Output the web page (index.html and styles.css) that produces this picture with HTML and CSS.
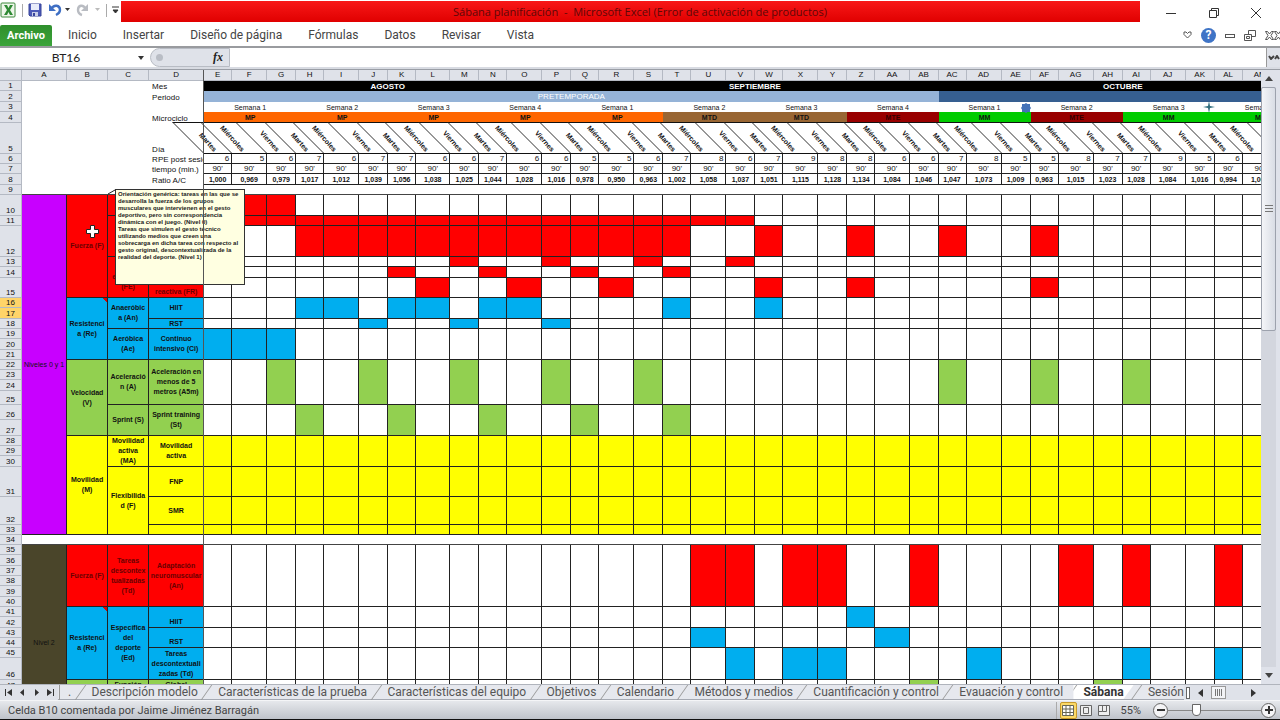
FILE: index.html
```html
<!DOCTYPE html>
<html lang="es">
<head>
    <meta charset="UTF-8">
    <meta name="viewport" content="width=device-width, initial-scale=1.0">
    <title>Sábana planificación - Microsoft Excel</title>
    <link rel="stylesheet" href="styles.css">
</head>
<body>
    <header class="titlebar">
        <div class="quick">
            <svg width="16" height="16" viewBox="0 0 16 16"><rect x="1" y="1" width="14" height="14" rx="1" fill="#eef6ea" stroke="#3c8a3c"/><path d="M4 3h3l1.500 3L10 3h3l-3 5 3 5h-3l-1.500-3L7 13H4l3-5z" fill="#2f8a35"/></svg>
            <span class="sep"></span>
            <button type="button" aria-label="Guardar"><svg width="14" height="14" viewBox="0 0 14 14"><path d="M1 1h12v12H2l-1-1z" fill="#4d5bb8" stroke="#39459a"/><rect x="3" y="1" width="8" height="6" fill="#e8ecfa"/><rect x="4" y="9" width="6" height="4" fill="#c9cfe8"/><rect x="5" y="10" width="2" height="3" fill="#39459a"/></svg></button>
            <button type="button" aria-label="Deshacer"><svg width="22" height="14" viewBox="0 0 22 14"><path d="M3 6c3-5 9-4 9 1 0 3-2 4-4 5" fill="none" stroke="#3f6fc4" stroke-width="2.400"/><path d="M1 1v7h7z" fill="#3f6fc4"/><path d="M17 5h5l-2.500 3z" fill="#333"/></svg></button>
            <button type="button" aria-label="Rehacer"><svg width="24" height="14" viewBox="0 0 24 14"><path d="M10 6c-3-5-8-4-8 1 0 3 1 4 4 5" fill="none" stroke="#b9bcc2" stroke-width="2.400"/><path d="M12 1v7H5z" fill="#b9bcc2"/><path d="M19 5h5l-2.500 3z" fill="#bbb"/></svg></button>
            <span class="sep"></span>
            <button type="button" aria-label="Personalizar"><svg width="7" height="8" viewBox="0 0 7 8"><path d="M0 1h7M1 4h5L3.500 7z" stroke="#333" fill="#333"/></svg></button>
        </div>
        <h1 class="title">Sábana planificación&nbsp; -&nbsp; Microsoft Excel (Error de activación de productos)</h1>
        <div class="window-buttons">
            <button type="button" aria-label="Minimizar"><svg width="10" height="10"><path d="M0 5.500h10" stroke="#333"/></svg></button>
            <button type="button" aria-label="Restaurar"><svg width="10" height="10" fill="none" stroke="#333"><path d="M.5 2.500h7v7h-7zM2.500 2.500v-2h7v7h-2"/></svg></button>
            <button type="button" aria-label="Cerrar"><svg width="10" height="10"><path d="M0 0l10 10M10 0L0 10" stroke="#333"/></svg></button>
        </div>
    </header>

    <nav class="ribbon">
        <a class="file" href="#">Archivo</a>
        <a href="#">Inicio</a>
        <a href="#">Insertar</a>
        <a href="#">Diseño de página</a>
        <a href="#">Fórmulas</a>
        <a href="#">Datos</a>
        <a href="#">Revisar</a>
        <a href="#">Vista</a>
        <div class="ribbon-tools">
            <button type="button" aria-label="Minimizar la cinta"><svg width="9" height="8" fill="none" stroke="#555"><path d="M4.500 7L1 3.500V1h2l1.500 1.500L6 1h2v2.500z"/></svg></button>
            <button type="button" aria-label="Ayuda" class="help">?</button>
            <button type="button" aria-label="Minimizar libro"><svg width="10" height="10" fill="none" stroke="#555"><rect x=".5" y="4.500" width="9" height="3"/></svg></button>
            <button type="button" aria-label="Restaurar libro"><svg width="12" height="11" fill="#fff" stroke="#555"><path d="M4.500.5h7v6h-7z"/><path d="M.5 4.500h7v6h-7zM2.500 6.500h3v2h-3z"/></svg></button>
            <button type="button" aria-label="Cerrar libro"><svg width="15" height="9" fill="none" stroke="#555"><path d="M.5.5h2l2 2.500 2-2.500h2L6 4.500l2.500 4h-2l-2-2.500-2 2.500h-2L3 4.500zM9.500.5h2l2 2.500 1.500-2.500M15 8.500L13.500 6l-2 2.500h-2l2.500-4-2.500-4"/></svg></button>
        </div>
    </nav>

    <div class="formula">
        <input class="name-box" type="text" value="BT16" aria-label="Cuadro de nombres">
        <button type="button" class="name-arrow" aria-label="Nombres"><svg width="6" height="4"><path d="M0 0h6L3 4z" fill="#333"/></svg></button>
        <div class="fx-box"><span class="knob"></span><button type="button" class="fx" aria-label="Insertar función"><i>f</i>x</button></div>
        <input class="formula-input" type="text" aria-label="Barra de fórmulas">
        <button type="button" class="expand" aria-label="Expandir"><svg width="12" height="5" fill="none" stroke="#444"><path d="M1 1l2 3 3-3M7 4l2-3 2 3" stroke-width="2"/></svg></button>
    </div>

    <main class="workbook">
        <div class="sheet">
            <table class="grid">
                <colgroup id="cols">
                    <col class="w-num"><col class="w-a"><col class="w-b"><col class="w-b"><col class="w-d">
                </colgroup>
                <thead>
                    <tr id="letters"><th></th><th>A</th><th>B</th><th>C</th><th>D</th></tr>
                </thead>
                <tbody id="body">
                    <tr><th>1</th><td colspan="3"></td><td class="name">Mes</td></tr>
                    <tr class="h11"><th>2</th><td colspan="3"></td><td class="name">Periodo</td></tr>
                    <tr><th>3</th><td colspan="3"></td><td></td></tr>
                    <tr class="h11"><th>4</th><td colspan="3"></td><td class="name">Microciclo</td></tr>
                    <tr class="h31"><th>5</th><td colspan="3"></td><td class="name">Día</td></tr>
                    <tr><th>6</th><td colspan="3"></td><td class="name">RPE post sesión</td></tr>
                    <tr><th>7</th><td colspan="3"></td><td class="name">tiempo (min.)</td></tr>
                    <tr class="h11"><th>8</th><td colspan="3"></td><td class="name">Ratio A/C</td></tr>
                    <tr class="blank"><th>9</th><td colspan="4"></td></tr>

                    <tr class="h21"><th>10</th><td rowspan="24" class="purple level">Niveles 0 y 1</td><td rowspan="6" class="red">Fuerza (F)</td><td class="red"></td><td class="red"></td></tr>
                    <tr><th>11</th><td rowspan="2" class="red"></td><td class="red"></td></tr>
                    <tr class="h31"><th>12</th><td class="red"></td></tr>
                    <tr><th>13</th><td rowspan="3" class="red">Fuerza<br>explosiva<br>(FE)</td><td class="red"></td></tr>
                    <tr class="h11"><th>14</th><td class="red"></td></tr>
                    <tr class="h20"><th>15</th><td class="red low">reactiva (FR)</td></tr>
                    <tr><th class="on">16</th><td rowspan="6" class="blue noted">Resistenci<br>a (Re)</td><td rowspan="3" class="blue">Anaeróbic<br>a (An)</td><td rowspan="2" class="blue">HIIT</td></tr>
                    <tr class="h11"><th class="on">17</th></tr>
                    <tr><th>18</th><td class="blue">RST</td></tr>
                    <tr><th>19</th><td rowspan="3" class="blue">Aeróbica<br>(Ae)</td><td rowspan="3" class="blue">Continuo<br>intensivo (Ci)</td></tr>
                    <tr class="h11"><th>20</th></tr>
                    <tr><th>21</th></tr>
                    <tr><th>22</th><td rowspan="6" class="green">Velocidad<br>(V)</td><td rowspan="4" class="green">Aceleració<br>n (A)</td><td rowspan="4" class="green">Aceleración en<br>menos de 5<br>metros (A5m)</td></tr>
                    <tr><th>23</th></tr>
                    <tr class="h11"><th>24</th></tr>
                    <tr class="h14"><th>25</th></tr>
                    <tr class="h15"><th>26</th><td rowspan="2" class="green">Sprint (S)</td><td rowspan="2" class="green">Sprint training<br>(St)</td></tr>
                    <tr class="h16"><th>27</th></tr>
                    <tr><th>28</th><td rowspan="6" class="yellow">Movilidad<br>(M)</td><td rowspan="3" class="yellow">Movilidad<br>activa<br>(MA)</td><td rowspan="3" class="yellow">Movilidad<br>activa</td></tr>
                    <tr><th>29</th></tr>
                    <tr class="h11"><th>30</th></tr>
                    <tr class="h30"><th>31</th><td rowspan="3" class="yellow">Flexibilida<br>d (F)</td><td class="yellow">FNP</td></tr>
                    <tr class="h28"><th>32</th><td class="yellow">SMR</td></tr>
                    <tr><th>33</th><td class="yellow"></td></tr>
                    <tr class="blank"><th>34</th><td colspan="4"></td></tr>

                    <tr><th>35</th><td rowspan="18" class="brown level">Nivel 2</td><td rowspan="6" class="red">Fuerza (F)</td><td rowspan="6" class="red">Tareas<br>descontex<br>tualizadas<br>(Td)</td><td rowspan="6" class="red">Adaptación<br>neuromuscular<br>(An)</td></tr>
                    <tr class="h11"><th>36</th></tr>
                    <tr><th>37</th></tr>
                    <tr><th>38</th></tr>
                    <tr class="h11"><th>39</th></tr>
                    <tr><th>40</th></tr>
                    <tr><th>41</th><td rowspan="6" class="blue noted">Resistenci<br>a (Re)</td><td rowspan="6" class="blue">Específica<br>del<br>deporte<br>(Ed)</td><td rowspan="2" class="blue low">HIIT</td></tr>
                    <tr class="h11"><th>42</th></tr>
                    <tr><th>43</th><td rowspan="2" class="blue low">RST</td></tr>
                    <tr><th>44</th></tr>
                    <tr><th>45</th><td rowspan="2" class="blue">Tareas<br>descontextuali<br>zadas (Td)</td></tr>
                    <tr class="h22"><th>46</th></tr>
                    <tr><th>47</th><td rowspan="6" class="green"></td><td class="green">Función</td><td class="green">Global</td></tr>
                    <tr><th>48</th></tr>
                    <tr><th>49</th></tr>
                    <tr><th>50</th></tr>
                    <tr><th>51</th></tr>
                    <tr><th>52</th></tr>
                </tbody>
            </table>
            <aside class="note">Orientación genérica: tareas en las que se<br>desarrolla la fuerza de los grupos<br>musculares que intervienen en el gesto<br>deportivo, pero sin correspondencia<br>dinámica con el juego. (Nivel 0)<br>Tareas que simulen el gesto técnico<br>utilizando medios que creen una<br>sobrecarga en dicha tarea con respecto al<br>gesto original, descontextualizada de la<br>realidad del deporte. (Nivel 1)</aside>
            <svg class="leader" width="8" height="6"><path d="M0 5l7-4" stroke="#222"/></svg>
            <div class="freeze"></div>
            <svg class="cursor" width="15" height="15" viewBox="0 0 15 15"><path d="M5.500 1.500h4v4h4v4h-4v4h-4v-4h-4v-4h4z" fill="#fff" stroke="#222"/></svg>
            <svg class="shape sun" width="10" height="10" viewBox="0 0 10 10"><path d="M5 0l1.500 1H9v2.500L10 5 9 6.500V9H6.500L5 10 3.500 9H1V6.500L0 5l1-1.500V1h2.500z" fill="#4472b8"/></svg>
            <svg class="shape star" width="12" height="12" viewBox="0 0 12 12"><path d="M6 0l1 5 5 1-5 1-1 5-1-5-5-1 5-1z" fill="#2f6c7c"/></svg>
        </div>
        <div class="vscroll">
            <button type="button" aria-label="Subir"><svg width="8" height="5"><path d="M0 5h8L4 0z" fill="#444"/></svg></button>
            <div class="track"><div class="thumb"><i></i><i></i><i></i></div></div>
            <button type="button" aria-label="Bajar"><svg width="8" height="5"><path d="M0 0h8L4 5z" fill="#444"/></svg></button>
        </div>
    </main>

    <div class="tabs">
        <div class="tab-nav">
            <button type="button" aria-label="Primera hoja"><svg width="7" height="7"><path d="M0 0h1v7H0zM7 0v7L2 3.500z" fill="#333"/></svg></button>
            <button type="button" aria-label="Hoja anterior"><svg width="7" height="7"><path d="M5 0v7L1 3.500z" fill="#333"/></svg></button>
            <button type="button" aria-label="Hoja siguiente"><svg width="7" height="7"><path d="M2 0v7l4-3.500z" fill="#333"/></svg></button>
            <button type="button" aria-label="Última hoja"><svg width="7" height="7"><path d="M6 0h1v7H6zM0 0v7l5-3.500z" fill="#333"/></svg></button>
        </div>
        <div class="sheet-tabs">
            <a href="#">.</a>
            <a href="#">Descripción modelo</a>
            <a href="#">Características de la prueba</a>
            <a href="#">Características del equipo</a>
            <a href="#">Objetivos</a>
            <a href="#">Calendario</a>
            <a href="#">Métodos y medios</a>
            <a href="#">Cuantificación y control</a>
            <a href="#">Evauación y control</a>
            <a href="#" class="current">Sábana</a>
            <a href="#">Sesión</a>
        </div>
        <div class="hscroll">
            <span class="grip"></span>
            <button type="button" aria-label="Izquierda"><svg width="5" height="8"><path d="M5 0v8L0 4z" fill="#333"/></svg></button>
            <span class="hthumb"><i></i><i></i><i></i><i></i></span>
            <button type="button" class="right" aria-label="Derecha"><svg width="5" height="8"><path d="M0 0v8l5-4z" fill="#333"/></svg></button>
        </div>
    </div>

    <footer class="status">
        <div class="message">Celda B10 comentada por Jaime Jiménez Barragán</div>
        <div class="views">
            <button type="button" class="active" aria-label="Normal"><svg width="12" height="11" fill="#fff" stroke="#665"><path d="M.5.5h11v10H.5zM.5 4h11M.5 7.500h11M4 .5v10M8 .5v10"/></svg></button>
            <button type="button" aria-label="Diseño de página"><svg width="12" height="11" fill="#eee" stroke="#666"><path d="M.5.5h11v10H.5zM3.500 2.500h5v6h-5z"/></svg></button>
            <button type="button" aria-label="Salto de página"><svg width="12" height="11" fill="#eee" stroke="#666"><path d="M.5.5h11v10H.5zM4.500.5v6h-4M8.500.5v6h-4"/></svg></button>
        </div>
        <label for="zoom">55%</label>
        <button type="button" class="round" aria-label="Alejar"><svg width="8" height="8"><path d="M0 4h8" stroke="#333" stroke-width="2"/></svg></button>
        <input id="zoom" type="range" min="10" max="400" value="120">
        <button type="button" class="round" aria-label="Acercar"><svg width="8" height="8"><path d="M0 4h8M4 0v8" stroke="#333" stroke-width="2"/></svg></button>
    </footer>

    <script src="script.js"></script>
</body>
</html>
```
FILE: styles.css
```css
* {
    box-sizing: border-box;
}
body {
    margin: 0;
    height: 100vh;
    display: flex;
    flex-direction: column;
    overflow: hidden;
    background: #fff;
    border-bottom: 1px solid #111;
    font-family: "Open Sans", "Noto Sans", sans-serif;
    font-size: 11px;
    color: #444;
}
button {
    display: flex;
    align-items: center;
    justify-content: center;
    padding: 0;
    border: 0;
    background: none;
    font: inherit;
    color: inherit;
}
a {
    color: inherit;
    text-decoration: none;
}

/* title bar */
.titlebar {
    display: flex;
    height: 24px;
    flex: none;
}
.quick {
    display: flex;
    align-items: center;
    gap: 6px;
    width: 121px;
    height: 20px;
    flex: none;
}
.quick .sep {
    width: 1px;
    height: 13px;
    background: #aaa;
}
.quick .sep + button {
    margin-left: -1px;
}
.title {
    flex: 1;
    height: 21px;
    margin: 1px 0 0;
    padding-left: 19px;
    background: linear-gradient(#f81818, #e00000);
    color: #5c0808;
    font-size: 11px;
    font-weight: 400;
    line-height: 22px;
    text-align: center;
}
.window-buttons {
    display: flex;
    justify-content: space-between;
    align-items: center;
    width: 140px;
    padding: 2px 19px 0 26px;
}

/* ribbon */
.ribbon {
    display: flex;
    align-items: center;
    gap: 26px;
    height: 22px;
    flex: none;
    font-family: Roboto, "Open Sans", sans-serif;
    font-size: 12px;
}
.ribbon .file {
    width: 52px;
    height: 21px;
    margin-right: -10px;
    border-radius: 2px 2px 0 0;
    background: linear-gradient(#2f8f2c, #3ba43a);
    color: #fff;
    font-size: 11px;
    font-weight: 700;
    line-height: 21px;
    text-align: center;
}
.ribbon-tools {
    display: flex;
    align-items: center;
    gap: 9px;
    margin-left: auto;
}
.help {
    width: 15px;
    height: 15px;
    border-radius: 50%;
    background: #3f74c6;
    color: #fff;
    font-weight: 700;
}

/* formula bar */
.formula {
    display: flex;
    height: 23px;
    flex: none;
    border-top: 2px solid #999b9f;
    border-bottom: 2px solid #d8dbe2;
}
.formula input {
    border: 0;
    padding: 0;
    outline: 0;
    min-width: 0;
    background: #fff;
    font: inherit;
    font-size: 12px;
    color: #222;
}
.formula .name-box {
    width: 132px;
    font-family: Lato, sans-serif;
    text-align: center;
}
.name-arrow {
    width: 18px;
}
.fx-box {
    display: flex;
    align-items: center;
    justify-content: space-between;
    width: 80px;
    padding: 0 6px 0 5px;
    border: 1px solid #b8bcc4;
    border-radius: 10px 0 0 10px;
    background: #dfe2e9;
}
.knob {
    width: 7px;
    height: 7px;
    border-radius: 50%;
    background: #b9bdc5;
}
.fx {
    font-family: "Liberation Serif", serif;
    font-size: 12px;
    font-style: italic;
    font-weight: 700;
    color: #222;
}
.formula .formula-input {
    flex: 1;
}
.expand {
    width: 14px;
    background: #dfe2e9;
    border-left: 1px solid #999;
}

/* sheet */
.workbook {
    display: flex;
    flex: 1;
    min-height: 0;
}
.sheet {
    position: relative;
    flex: 1;
    min-width: 0;
    overflow: hidden;
    border-top: 1px solid #9a9ea6;
}
.grid {
    width: 1307px;
    table-layout: fixed;
    border-collapse: separate;
    border-spacing: 0;
    font-family: "Liberation Sans", Arial, sans-serif;
    font-size: 8px;
    line-height: 9px;
    color: #111;
}
.w-num { width: 22px; }
.w-a { width: 45px; }
.w-b { width: 41px; }
.w-d { width: 55px; }
.w-28 { width: 28px; }
.w-29 { width: 29px; }
.w-34 { width: 34px; }
.w-35 { width: 35px; }
.grid tr { height: 10px; }
.grid .h11 { height: 11px; }
.grid .h14 { height: 14px; }
.grid .h15 { height: 15px; }
.grid .h16 { height: 16px; }
.grid .h20 { height: 20px; }
.grid .h21 { height: 21px; }
.grid .h22 { height: 22px; }
.grid .h28 { height: 28px; }
.grid .h30 { height: 30px; }
.grid .h31 { height: 31px; }
.grid th,
.grid td {
    padding: 0;
    white-space: nowrap;
}
.grid th {
    background: #dfe2e9;
    border-right: 1px solid #b4b9c3;
    border-bottom: 1px solid #b4b9c3;
    font-weight: 400;
    text-align: center;
    vertical-align: bottom;
}
.grid th.on {
    background: #ffd469;
}
.grid thead th {
    height: 11px;
    line-height: 10px;
}
.grid td {
    text-align: center;
}
.grid .name {
    padding-left: 3px;
    overflow: hidden;
    text-align: left;
    vertical-align: bottom;
}
.red, .blue, .green, .yellow, .plan {
    border-right: 1px solid #222;
    border-bottom: 1px solid #222;
}
.red, .blue, .green, .yellow, .purple, .brown {
    font-size: 7px;
    line-height: 10px;
    font-weight: 700;
    overflow: hidden;
}
.grid td.red,
.grid td.blue,
.grid td.green,
.grid td.yellow {
    line-height: 10px;
}
.grid .red:not(:empty) { color: #6b0000; }
.red { background: #f00; }
.blue { background: #00aeef; }
.green { background: #92d050; }
.yellow { background: #ff0; }
.purple { background: #c800ff; }
.brown { background: #4a452a; }
.grid td:empty {
    line-height: 1px;
}
.grid td.blue:not([rowspan]) {
    line-height: 9px;
}
.level {
    border-right: 1px solid #222;
    border-bottom: 1px solid #222;
    font-weight: 400;
}
.low {
    vertical-align: bottom;
}
.noted {
    background: linear-gradient(225deg, #e00000 3px, #00aeef 3px);
}
.blank td {
    border-bottom: 1px solid #444;
}
.month {
    background: #000;
    color: #fff;
}
.period {
    background: #95b3d7;
    color: #fff;
}
.period.dark {
    background: #365f91;
}
.month, .cycle {
    font-weight: 700;
}
.week {
    font-size: 7px;
}
.cycle {
    border-bottom: 1px solid #111;
    font-size: 7px;
}
.mp { background: #f60; }
.mtd { background: #963; }
.mte { background: #900; color: #300; }
.mm { background: #0c0; }
.value {
    border-right: 1px solid #222;
    border-bottom: 1px solid #222;
}
.grid .rpe {
    padding-right: 2px;
    text-align: right;
}
.ratio {
    font-size: 7px;
    font-weight: 700;
}

/* slanted day headings */
.day {
    position: relative;
    border-bottom: 1px solid #111;
}
.day::before {
    content: "";
    position: absolute;
    inset: -1px 0 0 -1px;
    border-left: 1px solid #333;
    border-top: 1px solid #111;
    transform: skewX(45deg);
    transform-origin: bottom left;
}
.day span {
    position: absolute;
    right: calc(100% - 11px);
    bottom: -2px;
    font-weight: 700;
    font-size: 7px;
    transform: rotate(48deg);
    transform-origin: right center;
}

/* things floating over the cells */
.note {
    position: absolute;
    left: 115px;
    top: 119px;
    width: 130px;
    height: 96px;
    padding: 1px 2px;
    overflow: hidden;
    border: 1px solid #333;
    background: #ffffe1;
    color: #222;
    font-family: "Liberation Sans", Arial, sans-serif;
    font-size: 6px;
    font-weight: 700;
    line-height: 7px;
    white-space: nowrap;
}
.leader {
    position: absolute;
    left: 108px;
    top: 119px;
}
.freeze {
    position: absolute;
    left: 203px;
    top: 0;
    bottom: 0;
    width: 1px;
    background: #555;
}
.cursor {
    position: absolute;
    left: 85px;
    top: 154px;
}
.shape {
    position: absolute;
}
.sun {
    left: 1021px;
    top: 33px;
}
.star {
    left: 1203px;
    top: 31px;
}

/* scrollbars */
.vscroll {
    display: flex;
    flex-direction: column;
    width: 19px;
    flex: none;
    padding-right: 4px;
    background: #dfe2ea;
    border-top: 1px solid #9a9ea6;
}
.vscroll button {
    height: 17px;
    flex: none;
}
.track {
    flex: 1;
    background: #d3d6de;
}
.thumb {
    display: flex;
    flex-direction: column;
    align-items: center;
    justify-content: center;
    gap: 2px;
    height: 42%;
    border: 1px solid #9da2ad;
    border-radius: 2px;
    background: linear-gradient(90deg, #f4f5f8, #d9dde5);
}
.thumb i {
    width: 8px;
    height: 1px;
    background: #777;
}

/* sheet tabs */
.tabs {
    display: flex;
    height: 16px;
    flex: none;
    border-top: 1px solid #b0b4bc;
    background: #dfe2e9;
    font-family: Roboto, "Open Sans", sans-serif;
    font-size: 12px;
}
.tab-nav {
    display: flex;
    align-items: center;
    justify-content: space-between;
    width: 58px;
    padding: 0 4px 0 5px;
    flex: none;
}
.sheet-tabs {
    display: flex;
    flex: 1;
    justify-content: space-between;
    min-width: 0;
    border-bottom: 1px solid #a5a9b2;
    background: #e6e8ee;
}
.sheet-tabs a {
    position: relative;
    padding-left: 10px;
    line-height: 15px;
    white-space: nowrap;
    color: #555;
}
.sheet-tabs a::before {
    content: "";
    position: absolute;
    left: -2px;
    top: 0;
    height: 15px;
    border-left: 1px solid #999;
    transform: skewX(-35deg);
}
.sheet-tabs a:first-child::before {
    transform: none;
    left: 1px;
}
.sheet-tabs .current {
    padding-right: 10px;
    margin-right: -6px;
    background: #fff;
    color: #333;
    font-weight: 700;
    clip-path: polygon(0 0, 100% 0, calc(100% - 10px) 100%, 0 100%);
}
.hscroll {
    display: flex;
    align-items: center;
    gap: 8px;
    width: 96px;
    padding-left: 2px;
    flex: none;
}
.grip {
    width: 4px;
    height: 12px;
    border: 1px solid #666;
    background: #fff;
}
.hthumb {
    display: flex;
    align-items: center;
    justify-content: center;
    gap: 1px;
    width: 15px;
    height: 13px;
    border: 1px solid #999;
    background: #f2f3f6;
}
.hthumb i {
    width: 1px;
    height: 7px;
    background: #777;
}
.hscroll .right {
    margin: 0 24px 0 auto;
}

/* status bar */
.status {
    display: flex;
    align-items: center;
    height: 19px;
    flex: none;
    padding: 0 4px 0 8px;
    border-top: 1px solid #f4f5f7;
    background: linear-gradient(#e6e8ec, #bfc3ca);
    font-family: Roboto, "Open Sans", sans-serif;
}
.message {
    flex: 1;
}
.views {
    display: flex;
    gap: 1px;
    padding-left: 3px;
    border-left: 1px solid #aaa;
}
.views button {
    width: 17px;
    height: 17px;
}
.views .active {
    border: 1px solid #c79a2b;
    border-radius: 2px;
    background: #fbd968;
}
.status label {
    margin: 0 12px 0 8px;
}
.round {
    width: 15px;
    height: 15px;
    border: 1px solid #666;
    border-radius: 50%;
    background: #f4f4f6;
}
#zoom {
    appearance: none;
    width: 93px;
    height: 15px;
    margin: 0;
    background: linear-gradient(#888, #888) center / 100% 1px no-repeat;
}
#zoom::-webkit-slider-thumb {
    appearance: none;
    width: 9px;
    height: 12px;
    border: 1px solid #666;
    border-radius: 1px 1px 5px 5px;
    background: #fff;
}
```
FILE: script.js
```js
const letters = 'E F G H I J K L M N O P Q R S T U V W X Y Z AA AB AC AD AE AF AG AH AI AJ AK AL AM AN'.split(' ');
const rpe = '6 5 6 7 6 7 7 6 6 7 6 6 5 5 6 7 8 6 7 9 8 8 6 6 7 8 5 5 8 7 7 9 5 6 5 6'.split(' ');
const ratio = ('1,000 0,969 0,979 1,017 1,012 1,039 1,056 1,038 1,025 1,044 1,028 1,016 0,978 0,950 0,963 1,002 1,058 1,037 ' +
    '1,051 1,115 1,128 1,134 1,084 1,046 1,047 1,073 1,009 0,963 1,015 1,023 1,028 1,084 1,016 0,994 1,004 1,012').split(' ');
const days = ['Martes', 'Miércoles', 'Viernes'];
const cycles = ['MP', 'MP', 'MP', 'MP', 'MP', 'MTD', 'MTD', 'MTE', 'MM', 'MTE', 'MM', 'MM'];

// first row, rows merged, colour, filled columns
const blocks = [
    [10, 1, 'red', 'E F G'],
    [11, 1, 'red', 'E F G H I J K L M N O P Q R S T U V'],
    [12, 1, 'red', 'H I J K L M N O P Q R S T W Z AC AF'],
    [13, 1, 'red', 'M P S V'],
    [14, 1, 'red', 'K N Q T'],
    [15, 1, 'red', 'L O R W Z AF'],
    [16, 2, 'blue', 'H I K L N O T W'],
    [18, 1, 'blue', 'J M P'],
    [19, 3, 'blue', 'E F G'],
    [22, 4, 'green', 'G J M P S AC AF AI'],
    [26, 2, 'green', 'H K N Q T'],
    [28, 3, 'yellow', letters.join(' ')],
    [31, 1, 'yellow', letters.join(' ')],
    [32, 1, 'yellow', letters.join(' ')],
    [33, 1, 'yellow', letters.join(' ')],
    [35, 6, 'red', 'U V X Y AB AG AI AL'],
    [41, 2, 'blue', 'Z'],
    [43, 2, 'blue', 'U AA'],
    [45, 2, 'blue', 'V X Y AD AI AL'],
    [47, 1, 'green', 'AB AH']
];

const rows = document.getElementById('body').rows;

function addCell(row, className, html, colSpan, rowSpan) {
    const td = document.createElement('td');
    td.className = className;
    td.innerHTML = html || '';
    td.colSpan = colSpan || 1;
    td.rowSpan = rowSpan || 1;
    rows[row - 1].appendChild(td);
}

letters.forEach((letter, i) => {
    const col = document.createElement('col');
    const short = letter === 'L' || letter === 'AA';
    col.className = ['w-28', short ? 'w-34' : 'w-35', 'w-29'][i % 3];
    document.getElementById('cols').appendChild(col);

    const th = document.createElement('th');
    th.textContent = letter;
    document.getElementById('letters').appendChild(th);

    addCell(5, 'day', '<span>' + days[i % 3] + '</span>');
    addCell(6, 'value rpe', rpe[i]);
    addCell(7, 'value', "90'");
    addCell(8, 'value ratio', ratio[i]);
});

addCell(1, 'month', 'AGOSTO', 12);
addCell(1, 'month', 'SEPTIEMBRE', 12);
addCell(1, 'month', 'OCTUBRE', 12);
addCell(2, 'period', 'PRETEMPORADA', 24);
addCell(2, 'period dark', '', 12);
cycles.forEach((cycle, i) => {
    addCell(3, 'week', 'Semana ' + (i % 4 + 1), 3);
    addCell(4, 'cycle ' + cycle.toLowerCase(), cycle, 3);
});
addCell(9, '', '', 36);
addCell(34, '', '', 36);

blocks.forEach(([row, span, color, filled]) => {
    const columns = filled.split(' ');
    letters.forEach(letter => addCell(row, columns.includes(letter) ? color : 'plan', '', 1, span));
});
```
